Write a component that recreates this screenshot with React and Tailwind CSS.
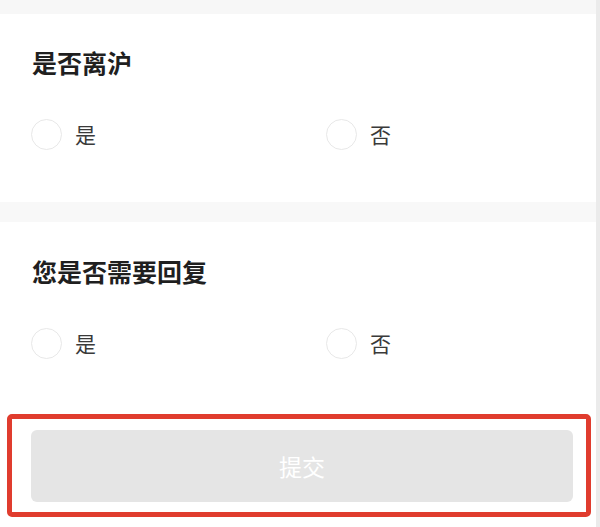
import React from 'react';

const font = { fontFamily: '"Noto Sans CJK SC", "Noto Sans", sans-serif' };

function Radio({ label }) {
  return (
    <div className="flex items-center gap-[13px]">
      <span className="block h-[31px] w-[31px] rounded-full border-[1.5px] border-[#e8e8e8] bg-white" />
      <span className="text-[21px] leading-[31px] text-[#3a3a3a]">{label}</span>
    </div>
  );
}

function Question({ title, className }) {
  return (
    <section className={`bg-white ${className}`}>
      <h2 className="pl-[32px] text-[25px] leading-[32px] font-semibold text-[#1f1f1f]">{title}</h2>
      <div className="mt-[41px] flex pl-[31px]">
        <div className="w-[295px]">
          <Radio label="是" />
        </div>
        <Radio label="否" />
      </div>
    </section>
  );
}

export default function App() {
  return (
    <div
      className="flex h-[527px] w-[600px] flex-col overflow-hidden border-r-[4px] border-[#ebebeb] bg-white"
      style={font}
    >
      <div className="h-[14px] shrink-0 bg-[#f7f7f7]" />
      <Question title="是否离沪" className="h-[188px] shrink-0 pt-[32px]" />
      <div className="h-[20px] shrink-0 bg-[#f8f8f8]" />
      <Question title="您是否需要回复" className="h-[192px] shrink-0 pt-[33px]" />
      <div className="ml-[7px] w-[584px] shrink-0 rounded-[5px] border-[5px] border-[#e03c2e] pt-[11px] pr-[13px] pb-[10px] pl-[19px]">
        <button
          type="button"
          className="flex h-[72px] w-full items-center justify-center rounded-[6px] bg-[#e5e5e5] text-[23px] text-white"
        >
          提交
        </button>
      </div>
    </div>
  );
}
